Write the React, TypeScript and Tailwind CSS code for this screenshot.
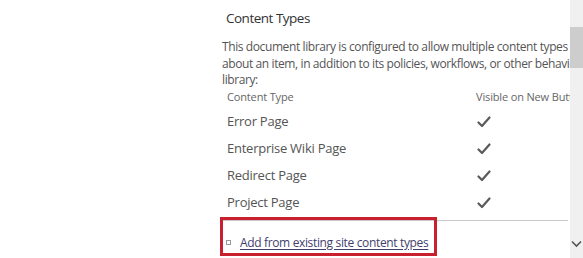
import React from "react";

const Check = () => (
  <svg width="14" height="12" viewBox="0 0 14 12" className="block">
    <path d="M1.5 6.5 L5 10 L12.5 1.5" fill="none" stroke="#5a5a5a" strokeWidth="2.2" strokeLinecap="round" strokeLinejoin="round" />
  </svg>
);

const rows = ["Error Page", "Enterprise Wiki Page", "Redirect Page", "Project Page"];

export default function App() {
  return (
    <div
      className="flex w-[583px] h-[258px] bg-white overflow-hidden"
      style={{ fontFamily: '"Open Sans", "Noto Sans", sans-serif' }}
    >
      <div className="relative flex-1 overflow-hidden pl-[222px]">
        <div className="w-[420px]">
          <div className="pt-[9px] pl-[4px] text-[13.5px] leading-[18px] tracking-[-0.5px] text-[#333]">Content Types</div>
          <div className="mt-[12px] text-[12px] leading-[16.5px] tracking-[-0.4px] text-[#555] whitespace-nowrap">
            <div>This document library is configured to allow multiple content types to specify the information you want to display</div>
            <div>about an item, in addition to its policies, workflows, or other behavior. The following</div>
            <div>library:</div>
          </div>
          <div className="mt-0 pl-[5px] flex text-[11px] leading-[16px] tracking-[-0.15px] text-[#666] whitespace-nowrap">
            <div className="w-[249px]">Content Type</div>
            <div>Visible on New Button</div>
          </div>
          <div className="pl-[5px] mt-[4px]">
            {rows.map((r) => (
              <div key={r} className="flex items-center h-[27px] text-[13px] tracking-[-0.25px] text-[#555] whitespace-nowrap">
                <div className="w-[250px]">{r}</div>
                <Check />
              </div>
            ))}
          </div>
          <div className="mt-[3px] h-px bg-[#c8c8c8] w-[346px]" />
          <div className="mt-[13px] pl-[4px] flex items-center gap-[9px] text-[12px] tracking-[-0.35px] whitespace-nowrap">
            <span className="block w-[5px] h-[5px] border border-[#999]" />
            <span className="underline text-[#3f3f6e] underline-offset-2">Add from existing site content types</span>
          </div>
        </div>
        <div className="absolute left-[220px] top-[217px] w-[217px] h-[39px] border-[3px] border-[#c8202f]" />
      </div>
      <div className="w-[13px] bg-[#f0f0f0] flex flex-col items-center">
        <div className="mt-[27px] w-full h-[41px] bg-[#cdcdcd]" />
        <div className="flex-1" />
        <svg width="11" height="8" viewBox="0 0 11 8" className="mb-[10px]">
          <path d="M1 1.5 L5.5 6 L10 1.5" fill="none" stroke="#555" strokeWidth="1.6" />
        </svg>
      </div>
    </div>
  );
}
